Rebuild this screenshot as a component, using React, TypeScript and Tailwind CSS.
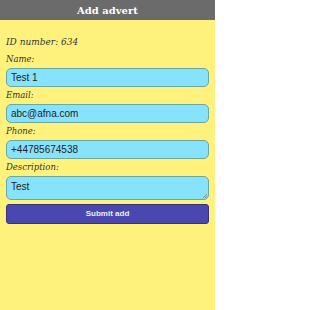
import React from "react";

const labelCls = "block h-[9px] text-[8.5px] italic text-[#333] leading-[9px]";
const inputCls =
  "w-full h-[19px] rounded-[5px] border border-[#6aa8a0] bg-[#87e2fb] px-[4px] text-[10px] text-[#222] outline-none";
const sans = { fontFamily: '"Liberation Sans", Arial, sans-serif' };
const serif = { fontFamily: '"DejaVu Serif", "Liberation Serif", serif' };

export default function App() {
  return (
    <div className="w-[215px] h-[310px] bg-[#fff27c] flex flex-col">
      <div
        className="h-[20px] shrink-0 bg-[#6b6b6b] flex items-center justify-center text-white text-[10px] font-bold"
        style={serif}
      >
        Add advert
      </div>
      <div className="flex flex-col px-[6px] pt-[18px]" style={serif}>
        <div className="h-[9px] text-[9px] italic text-[#333] leading-[9px]">ID number: 634</div>
        <label className={labelCls + " mt-[8px]"}>Name:</label>
        <div className={inputCls + " mt-[4px] flex items-center"} style={sans}>Test 1</div>
        <label className={labelCls + " mt-[4px]"}>Email:</label>
        <div className={inputCls + " mt-[4px] flex items-center"} style={sans}>abc@afna.com</div>
        <label className={labelCls + " mt-[4px]"}>Phone:</label>
        <div className={inputCls + " mt-[4px] flex items-center"} style={sans}>+44785674538</div>
        <label className={labelCls + " mt-[4px]"}>Description:</label>
        <div
          className="relative mt-[4px] w-full h-[24px] rounded-[5px] border border-[#6aa8a0] bg-[#87e2fb] px-[4px] pt-[2px] text-[10px] text-[#222]"
          style={sans}
        >
          Test
          <svg className="absolute right-[1px] bottom-[1px]" width="5" height="5" viewBox="0 0 5 5">
            <path d="M5 1 L1 5 M5 3 L3 5" stroke="#777" strokeWidth="0.7" />
          </svg>
        </div>
        <button
          className="mt-[4px] w-full h-[20px] rounded-[3px] border border-[#33337a] bg-[#4a47b0] text-[#eee] text-[8px] font-bold"
          style={sans}
        >
          Submit add
        </button>
      </div>
    </div>
  );
}
